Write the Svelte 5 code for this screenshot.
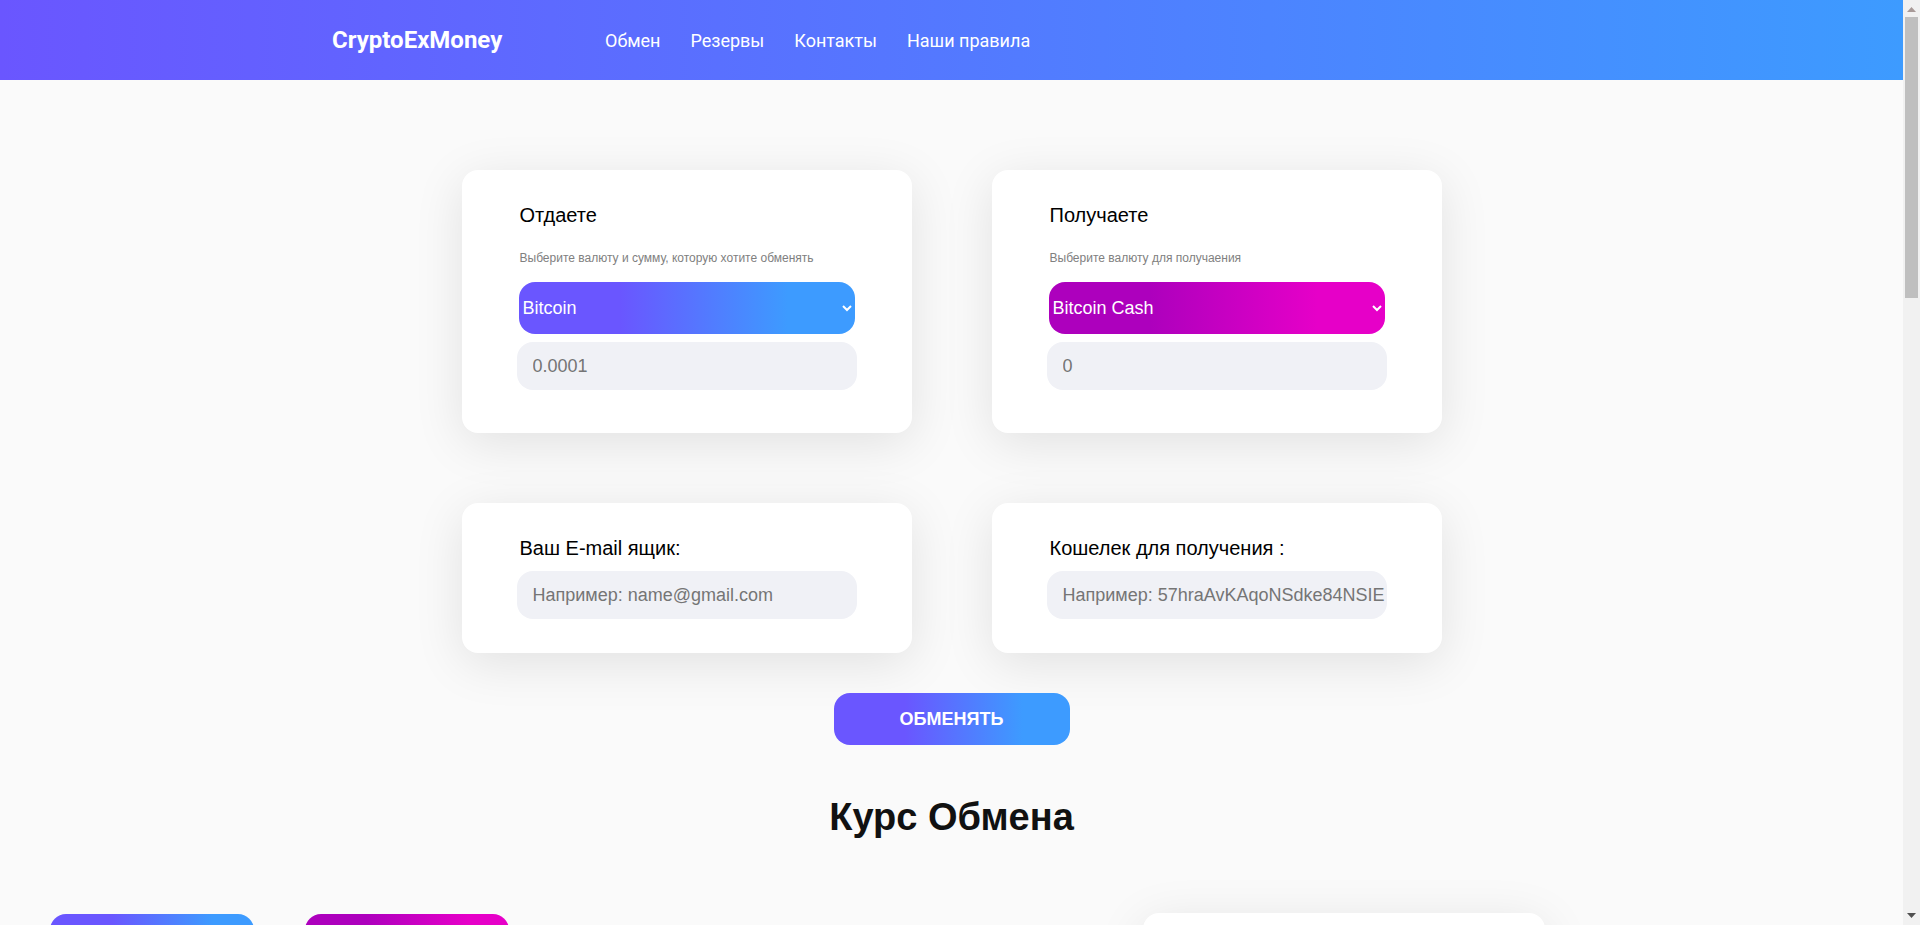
<script>
	const exchangeCards = [
		{ title: 'Отдаете', hint: 'Выберите валюту и сумму, которую хотите обменять', currency: 'Bitcoin', amount: '0.0001', tone: 'blue' },
		{ title: 'Получаете', hint: 'Выберите валюту для получаения', currency: 'Bitcoin Cash', amount: '0', tone: 'pink' }
	];

	const contactCards = [
		{ title: 'Ваш E-mail ящик:', placeholder: 'Например: name@gmail.com' },
		{ title: 'Кошелек для получения :', placeholder: 'Например: 57hraAvKAqoNSdke84NSIE' }
	];

	const navLinks = ['Обмен', 'Резервы', 'Контакты', 'Наши правила'];
</script>

<header class="header">
	<div class="logo">CryptoExMoney</div>
	<nav class="nav">
		{#each navLinks as link}
			<a href="#top">{link}</a>
		{/each}
	</nav>
</header>

<main class="content">
	<section class="cards">
		{#each exchangeCards as card}
			<div class="card">
				<h3>{card.title}</h3>
				<p class="hint">{card.hint}</p>
				<select class="currency {card.tone}">
					<option>{card.currency}</option>
				</select>
				<input class="field" type="text" placeholder={card.amount} />
			</div>
		{/each}
	</section>

	<section class="cards contact">
		{#each contactCards as card}
			<div class="card short">
				<h3>{card.title}</h3>
				<input class="field" type="text" placeholder={card.placeholder} />
			</div>
		{/each}
	</section>

	<button class="submit">ОБМЕНЯТЬ</button>

	<h2 class="rates-title">Курс Обмена</h2>

	<section class="rates">
		<select class="currency blue rate-select">
			<option>Bitcoin</option>
		</select>
		<select class="currency pink rate-select">
			<option>Bitcoin Cash</option>
		</select>
		<div class="rate-card"></div>
	</section>
</main>

<!-- the browser window's scrollbar, headless chrome does not paint one -->
<div class="scrollbar" aria-hidden="true">
	<svg class="arrow up" width="9" height="5" viewBox="0 0 9 5"><path d="M4.5 0L9 5H0z" /></svg>
	<div class="thumb"></div>
	<svg class="arrow down" width="9" height="5" viewBox="0 0 9 5"><path d="M0 0h9L4.5 5z" /></svg>
</div>

<style>
	:global(body) {
		margin: 0 17px 0 0;
		background: #fafafa;
		font-family: 'Liberation Sans', Arial, sans-serif;
		color: #000;
	}

	.header {
		display: flex;
		align-items: center;
		height: 80px;
		padding-left: 332px;
		background: linear-gradient(90deg, #6a56ff, #3d9bff);
		color: #fff;
		font-family: Roboto, sans-serif;
	}

	.logo {
		width: 273px;
		font-size: 24px;
		font-weight: 700;
	}

	.nav {
		display: flex;
		gap: 30px;
	}

	.nav a {
		color: #fff;
		font-size: 18px;
		font-weight: 400;
		text-decoration: none;
	}

	.content {
		display: flex;
		flex-direction: column;
		align-items: center;
		min-height: 2853px;
		padding-top: 90px;
		box-sizing: border-box;
	}

	.cards {
		display: flex;
		gap: 80px;
	}

	.contact {
		margin-top: 70px;
	}

	.card {
		display: flex;
		flex-direction: column;
		align-items: center;
		width: 450px;
		height: 263px;
		padding: 34px 55px 0;
		box-sizing: border-box;
		background: #fff;
		border-radius: 16px;
		box-shadow: 0 10px 50px rgba(0, 0, 0, 0.1);
	}

	.card.short {
		height: 150px;
	}

	.card h3 {
		align-self: flex-start;
		margin: 0 0 0 3px;
		font-size: 20px;
		font-weight: 400;
		line-height: 23px;
	}

	.hint {
		align-self: flex-start;
		margin: 24px 0 17px 3px;
		font-size: 12px;
		line-height: 14px;
		color: #808080;
	}

	.currency {
		width: 336px;
		height: 52px;
		border: none;
		border-radius: 16px;
		color: #fff;
		font-family: inherit;
		font-size: 18px;
	}

	.currency.blue {
		background: linear-gradient(90deg, #6a56ff 30%, #3d9bff 80%);
	}

	.currency.pink {
		background: linear-gradient(90deg, #ad00bd 30%, #e600c8 80%);
	}

	.field {
		width: 340px;
		height: 48px;
		margin-top: 8px;
		padding: 0 2px 0 16px;
		box-sizing: border-box;
		border: none;
		border-radius: 16px;
		background: #f0f1f6;
		font-family: inherit;
		font-size: 18px;
	}

	.short .field {
		margin-top: 11px;
	}

	.submit {
		width: 236px;
		height: 52px;
		margin-top: 40px;
		border: none;
		border-radius: 16px;
		background: linear-gradient(90deg, #6a56ff 30%, #3d9bff 80%);
		color: #fff;
		font-family: inherit;
		font-size: 18px;
		font-weight: 700;
	}

	.rates-title {
		margin: 50px 0 0;
		font-size: 38px;
		line-height: 44px;
		color: #111;
	}

	.rates {
		display: flex;
		align-items: flex-start;
		align-self: stretch;
		margin-top: 75px;
		padding-left: 50px;
	}

	.rate-select {
		width: 204px;
		margin-right: 51px;
	}

	.rate-card {
		width: 402px;
		height: 260px;
		margin: -1px 0 0 583px;
		background: #fff;
		border-radius: 16px;
		box-shadow: 0 10px 50px rgba(0, 0, 0, 0.1);
	}

	.scrollbar {
		position: fixed;
		top: 0;
		right: 0;
		bottom: 0;
		width: 17px;
		background: #f1f1f1;
	}

	.thumb {
		position: absolute;
		top: 17px;
		left: 2px;
		width: 13px;
		height: 281px;
		background: #bfbfbf;
	}

	.arrow {
		position: absolute;
		left: 4px;
	}

	.arrow.up {
		top: 7px;
		fill: #a89a98;
	}

	.arrow.down {
		bottom: 7px;
		fill: #505050;
	}
</style>
